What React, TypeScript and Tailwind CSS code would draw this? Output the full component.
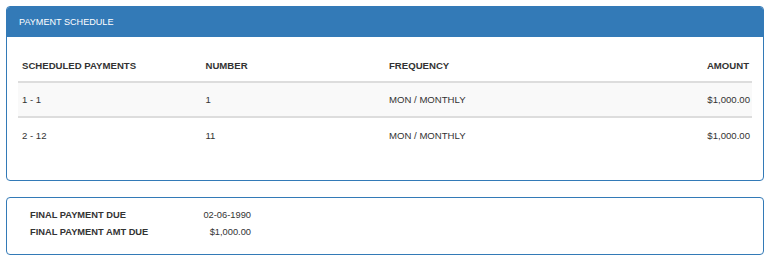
export default function App() {
  const rows = [
    ["1 - 1", "1", "MON / MONTHLY", "$1,000.00"],
    ["2 - 12", "11", "MON / MONTHLY", "$1,000.00"],
  ];
  return (
    <div className="w-[770px] h-[266px] bg-white p-[6px] text-[9px] text-[#333] font-['Liberation_Sans',Arial,sans-serif]">
      <div className="h-[175px] border border-[#337ab7] rounded-[4px] overflow-hidden flex flex-col">
        <div className="h-[30px] bg-[#337ab7] text-white flex items-center pl-[12px] pt-[2px] leading-none text-[9.1px]">
          PAYMENT SCHEDULE
        </div>
        <div className="px-[11px] pt-[20px] text-[9.6px]">
          <div className="grid grid-cols-4 h-[26px] border-b-2 border-[#ddd] font-bold leading-[12px]">
            <div className="px-[4px] pt-[3px]">SCHEDULED PAYMENTS</div>
            <div className="px-[4px] pt-[3px]">NUMBER</div>
            <div className="px-[4px] pt-[3px]">FREQUENCY</div>
            <div className="pl-[4px] pr-[3px] pt-[3px] text-right">AMOUNT</div>
          </div>
          {rows.map((r, i) => (
            <div
              key={i}
              className={`grid grid-cols-4 h-[35px] items-center leading-[12px] ${i === 0 ? "bg-[#f9f9f9] border-b-2 border-[#ddd]" : ""}`}
            >
              <div className="px-[4px]">{r[0]}</div>
              <div className="px-[4px]">{r[1]}</div>
              <div className="px-[4px]">{r[2]}</div>
              <div className="pl-[4px] pr-[2px] text-right">{r[3]}</div>
            </div>
          ))}
        </div>
      </div>
      <div className="mt-[16px] h-[58px] border border-[#337ab7] rounded-[4px] pl-[23px] pt-[9px] text-[9.3px]">
        <div className="grid grid-cols-[130px_91px] leading-[17px]">
          <div className="font-bold">FINAL PAYMENT DUE</div>
          <div className="text-right">02-06-1990</div>
          <div className="font-bold">FINAL PAYMENT AMT DUE</div>
          <div className="text-right">$1,000.00</div>
        </div>
      </div>
    </div>
  );
}
